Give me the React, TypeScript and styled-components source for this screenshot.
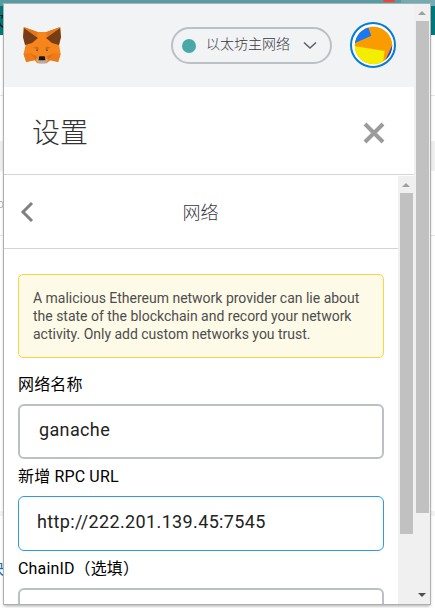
import React from 'react';
import styled, { createGlobalStyle } from 'styled-components';

const GlobalStyle = createGlobalStyle`
  * { box-sizing: border-box; }
  body {
    margin: 0;
    overflow: hidden;
    background: #fff;
    font-family: Roboto, 'Noto Sans CJK SC', sans-serif;
  }
`;

const Page = styled.div`
  position: relative;
  width: 435px;
  height: 608px;
  overflow: hidden;
`;

const TabStrip = styled.div`
  display: flex;
  justify-content: flex-end;
  height: 6px;
  background: #559ca3;
`;

const TabBadge = styled.div`
  width: 12px;
  height: 2px;
  margin-right: 6px;
  border-radius: 0 0 2px 2px;
  background: #f44336;
`;

const ActiveTab = styled.div`
  width: 34px;
  background: #73adb3;
`;

const SiteBar = styled.div`
  height: 29px;
  background: #007a7c;
`;

const SiteBlock = styled.div<{ $height: number; $color?: string; $line?: boolean }>`
  height: ${p => p.$height}px;
  background: ${p => p.$color || '#fff'};
  border-bottom: ${p => (p.$line ? '1px solid #e5e5e5' : '0')};
`;

const SiteLink = styled.div`
  width: 16px;
  margin-left: -12px;
  font-size: 16px;
  line-height: 20px;
  color: #1b6fb5;
`;

const SiteText = styled(SiteLink)`
  width: 12px;
  margin-left: -2px;
  font-size: 9px;
  line-height: 10px;
  color: #aaa;
`;

const BarText = styled(SiteLink)`
  padding-top: 5px;
  color: #001c1c;
`;

const Popup = styled.main`
  position: absolute;
  top: 4px;
  left: 4px;
  display: flex;
  width: 426px;
  height: 600px;
  background: #fff;
  box-shadow: 0 0 0 1px #b0b0b0, 0 2px 3px rgba(0, 0, 0, 0.35);
`;

const Content = styled.div`
  display: flex;
  flex-direction: column;
  width: 410px;
`;

const Header = styled.header`
  display: flex;
  align-items: center;
  flex: 0 0 83px;
  padding: 0 18px;
  background: #f2f3f4;
`;

const FoxLogo = styled.svg`
  display: block;
  width: 40px;
  height: 38px;
  margin-bottom: 1px;
`;

const NetworkPill = styled.button`
  display: flex;
  align-items: center;
  width: 161px;
  height: 37px;
  margin: 0 18px 0 auto;
  padding: 0 13px 0 9px;
  border: 2px solid #bbc0c5;
  border-radius: 19px;
  background: transparent;
  font: 300 14px/20px 'Noto Sans CJK SC', sans-serif;
  color: #36383f;
`;

const NetworkDot = styled.span`
  width: 14px;
  height: 14px;
  margin-right: 10px;
  border-radius: 50%;
  background: #4aa8aa;
`;

const NetworkName = styled.span`
  margin: 0 auto 5px 0;
`;

const Avatar = styled.svg`
  display: block;
  width: 46px;
  height: 46px;
  margin-bottom: 1px;
`;

const TitleBar = styled.div`
  display: flex;
  align-items: center;
  justify-content: space-between;
  flex: 0 0 88px;
  padding: 4px 29px 0 28px;
  border-bottom: 1px solid #d2d5d8;
`;

const Title = styled.h1`
  margin: 0;
  padding-bottom: 4px;
  font: 300 28px/40px 'Noto Sans CJK SC', sans-serif;
  color: #333;
`;

const Icon = styled.svg`
  display: block;
  fill: none;
`;

const Body = styled.div`
  display: flex;
  flex: 1;
  min-height: 0;
  padding-top: 1px;
`;

const Settings = styled.section`
  width: 394px;
  overflow: hidden;
`;

const SubHeader = styled.div`
  display: grid;
  grid-template-columns: 20px 1fr 20px;
  align-items: center;
  height: 73px;
  padding: 0 14px 0 13px;
  border-bottom: 1px solid #d2d5d8;
`;

const SubTitle = styled.h2`
  margin: 0;
  padding-bottom: 2px;
  text-align: center;
  font: 300 18px/26px 'Noto Sans CJK SC', sans-serif;
  color: #36383f;
`;

const Form = styled.div`
  padding: 25px 14px 0;
`;

const Warning = styled.p`
  height: 84px;
  margin: 0 0 15px;
  padding: 14px;
  border: 1px solid #ffd33d;
  border-radius: 5px;
  background: #fefae8;
  font-size: 14px;
  line-height: 18px;
  letter-spacing: -0.01px;
  color: #4d4d4d;
  white-space: nowrap;
`;

const Field = styled.label`
  display: block;
  height: 92px;
  font-size: 16px;
  line-height: 24px;
  color: #000;
`;

const LabelText = styled.span`
  letter-spacing: 0.15px;
`;

const Input = styled.input<{ $focused?: boolean }>`
  display: block;
  width: 366px;
  height: 55px;
  margin-top: 7px;
  padding: ${p => (p.$focused ? '0 18px 5px' : '0 19px 5px')};
  border: ${p => (p.$focused ? '1px solid #2f9ae0' : '2px solid #bbc0c5')};
  border-radius: 6px;
  outline: none;
  background: #fff;
  font: 18px Roboto, sans-serif;
  letter-spacing: 0.36px;
  color: #222;
`;

const Track = styled.div`
  display: flex;
  flex-direction: column;
  align-items: center;
  width: 16px;
  height: 100%;
  padding: 7px 0;
  background: #f0f0f0;
`;

const Thumb = styled.div<{ $height: number }>`
  width: 13px;
  height: ${p => p.$height}px;
  margin-top: 6px;
  background: #c1c1c1;
`;

const Arrow = styled.div<{ $down?: boolean }>`
  width: 8px;
  height: 4px;
  margin-top: ${p => (p.$down ? 'auto' : '0')};
  background: ${p => (p.$down ? '#505050' : '#a0a0a0')};
  clip-path: ${p => (p.$down ? 'polygon(0 0, 100% 0, 50% 100%)' : 'polygon(50% 0, 100% 100%, 0 100%)')};
`;

function Fox() {
  return (
    <FoxLogo viewBox="0 0 40 38">
      <path d="M1.500 1 15 6h10L38.500 1l.3 10-1.700 8 1.500 9-2.300 8-7.500-2-4.200 3.300h-9.200L12.200 34l-8 2-2.600-8 2-9L1.300 11Z" fill="#f6851b" />
      <path d="m2 2 14 10-6 5-7 2-2-8ZM38 2 24 12l6 5 7 2 2-8Z" fill="#763d16" />
      <path d="m1.800 1 14 5-1 5ZM38.200 1l-14 5 1 5Z" fill="#e2761b" />
      <path d="m1.600 28 8-1 4 7-9.400 2ZM38.600 28l-8-1-4 7 9.400 2Z" fill="#ec7c1b" />
      <path d="m11 21.500 5-1 1 3.500ZM29 21.500l-5-1-1 3.500Z" fill="#d56b19" />
      <path d="m9 28 6 2-1 4ZM31 28l-6 2 1 4Z" fill="#dd7119" />
      <path d="m14 23.500h2v1.500h-2ZM24 23.500h2v1.500h-2Z" fill="#685b50" />
      <path d="m14 34 2.500-2h7l2.500 2-3 3.500h-6Z" fill="#c0ad9e" />
      <path d="m17 31 .5-.8h5l.5.8.4 3.200h-6.800Z" fill="#161616" />
    </FoxLogo>
  );
}

function Account() {
  return (
    <Avatar viewBox="0 0 46 46">
      <defs>
        <clipPath id="account"><circle cx="23.500" cy="23.500" r="18.700" /></clipPath>
      </defs>
      <circle cx="23" cy="23" r="22" fill="#fff" stroke="#037dd6" strokeWidth="2" />
      <g clipPath="url(#account)">
        <path d="M0 0h46v46H0Z" fill="#fa9c00" />
        <path d="M4 21.500 21.300 13.700 17.800 4H4Z" fill="#1877f2" />
        <path d="m4 23.900 30.700 5-2 14H4Z" fill="#f3ed00" />
        <path d="m43 21.500-8 17.500 8-4Z" fill="#2343dc" />
      </g>
    </Avatar>
  );
}

function Scrollbar({ thumb, down }: { thumb: number; down?: boolean }) {
  return (
    <Track>
      <Arrow />
      <Thumb $height={thumb} />
      {down && <Arrow $down />}
    </Track>
  );
}

export default function App() {
  return (
    <>
      <GlobalStyle />
      <Page>
        <TabStrip><TabBadge /><ActiveTab /></TabStrip>
        <SiteBar><BarText>欢</BarText></SiteBar>
        <SiteBlock $height={61} $line />
        <SiteBlock $height={45} />
        <SiteBlock $height={30} $color="#f0f0f0" />
        <SiteBlock $height={29} />
        <SiteText>D</SiteText>
        <SiteBlock $height={26} $line />
        <SiteBlock $height={275} />
        <SiteBlock $height={5} $color="#f4f4f4" />
        <SiteBlock $height={43} />
        <SiteLink>快</SiteLink>

        <Popup>
          <Content>
            <Header>
              <Fox />
              <NetworkPill>
                <NetworkDot />
                <NetworkName>以太坊主网络</NetworkName>
                <Icon width="14" height="9" viewBox="0 0 14 9" stroke="#5b5d67" strokeWidth="1.500">
                  <path d="m1 1.500 6 5.500 6-5.500" />
                </Icon>
              </NetworkPill>
              <Account />
            </Header>
            <TitleBar>
              <Title>设置</Title>
              <Icon width="22" height="22" viewBox="0 0 22 22" stroke="#9b9b9b" strokeWidth="4">
                <path d="m2 2 18 18M20 2 2 20" />
              </Icon>
            </TitleBar>
            <Body>
              <Settings>
                <SubHeader>
                  <Icon width="18" height="22" viewBox="0 0 18 22" stroke="#808080" strokeWidth="3">
                    <path d="m15 2-9 9 9 9" />
                  </Icon>
                  <SubTitle>网络</SubTitle>
                </SubHeader>
                <Form>
                  <Warning>
                    A malicious Ethereum network provider can lie about<br />
                    the state of the blockchain and record your network<br />
                    activity. Only add custom networks you trust.
                  </Warning>
                  <Field><LabelText>网络名称</LabelText><Input defaultValue="ganache" /></Field>
                  <Field><LabelText>新增 RPC URL</LabelText><Input $focused defaultValue="http://222.201.139.45:7545" /></Field>
                  <Field><LabelText>ChainID（选填）</LabelText><Input /></Field>
                </Form>
              </Settings>
              <Scrollbar thumb={341} />
            </Body>
          </Content>
          <Scrollbar thumb={492} down />
        </Popup>
      </Page>
    </>
  );
}
